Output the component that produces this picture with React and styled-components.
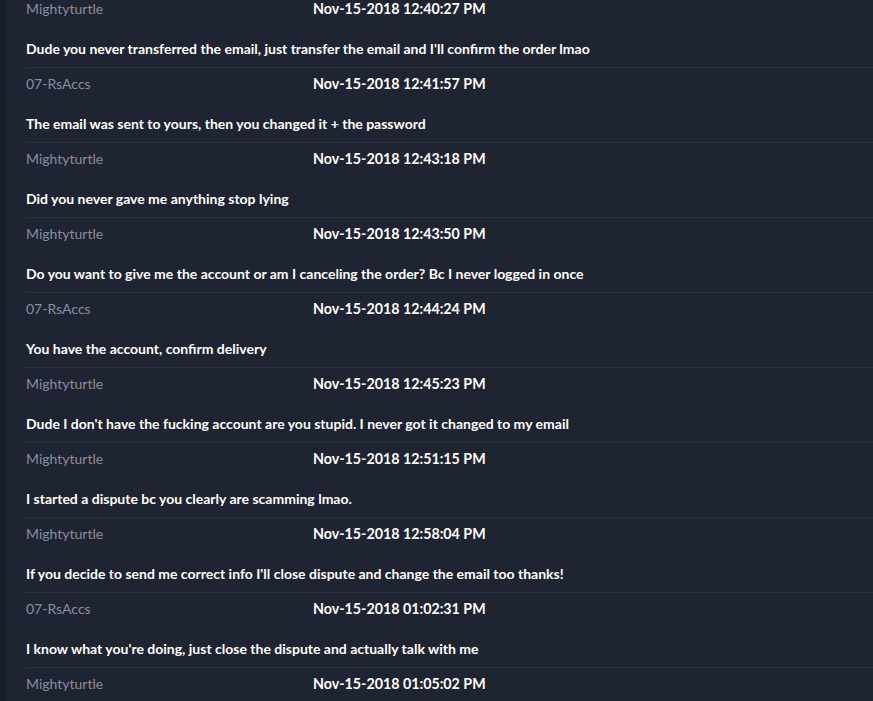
import React from "react";
import styled, { createGlobalStyle } from "styled-components";

const Global = createGlobalStyle`
  html, body { margin: 0; padding: 0; background: #1f2433; }
  body { font-family: Lato, "Open Sans", sans-serif; overflow: hidden; }
`;

const Page = styled.div`
  display: flex;
  width: 873px;
  height: 701px;
  overflow: hidden;
  background: #1f2433;
`;

const Rail = styled.div`
  flex: 0 0 7px;
  background: #1a1e2a;
`;

const Feed = styled.div`
  flex: 1;
  padding-left: 19px;
  margin-top: -7px;
`;

const Entry = styled.div`
  border-bottom: 1px solid #2b303e;
`;

const Header = styled.div`
  display: flex;
  align-items: center;
  height: 32px;
  font-size: 14px;
  line-height: 16px;
`;

const Author = styled.span`
  flex: 0 0 287px;
  color: #8a8e98;
  font-weight: 400;
`;

const Stamp = styled.span`
  color: #ffffff;
  font-weight: 700;
  font-size: 14.25px;
`;

const Message = styled.div`
  padding: 16px 0 10px;
  font-size: 14px;
  line-height: 16px;
  color: #ffffff;
  font-weight: 700;
  height: 16px;
`;

const entries = [
  ["Mightyturtle", "12:40:27 PM", "Dude you never transferred the email, just transfer the email and I'll confirm the order lmao"],
  ["07-RsAccs", "12:41:57 PM", "The email was sent to yours, then you changed it + the password"],
  ["Mightyturtle", "12:43:18 PM", "Did you never gave me anything stop lying"],
  ["Mightyturtle", "12:43:50 PM", "Do you want to give me the account or am I canceling the order? Bc I never logged in once"],
  ["07-RsAccs", "12:44:24 PM", "You have the account, confirm delivery"],
  ["Mightyturtle", "12:45:23 PM", "Dude I don't have the fucking account are you stupid. I never got it changed to my email"],
  ["Mightyturtle", "12:51:15 PM", "I started a dispute bc you clearly are scamming lmao."],
  ["Mightyturtle", "12:58:04 PM", "If you decide to send me correct info I'll close dispute and change the email too thanks!"],
  ["07-RsAccs", "01:02:31 PM", "I know what you're doing, just close the dispute and actually talk with me"],
  ["Mightyturtle", "01:05:02 PM", ""],
];

export default function App() {
  return (
    <Page>
      <Global />
      <Rail />
      <Feed>
        {entries.map(([who, time, text], i) => (
          <Entry key={i}>
            <Header>
              <Author>{who}</Author>
              <Stamp>Nov-15-2018 {time}</Stamp>
            </Header>
            <Message>{text}</Message>
          </Entry>
        ))}
      </Feed>
    </Page>
  );
}
